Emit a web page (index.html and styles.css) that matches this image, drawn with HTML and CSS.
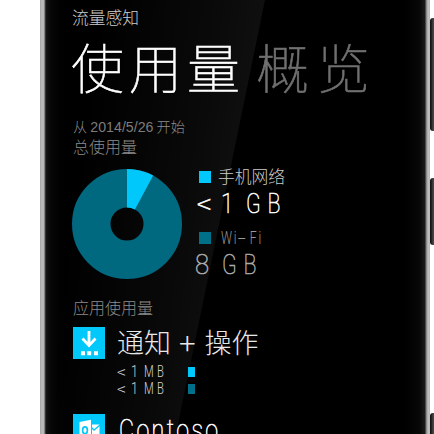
FILE: index.html
```html
<!DOCTYPE html>
<html lang="zh-CN">
<head>
<meta charset="utf-8">
<title>流量感知</title>
<link rel="stylesheet" href="styles.css">
</head>
<body>
<div class="stage">
  <main class="phone">
    <div class="gloss"></div>
    <div class="content">
      <div class="app-name">流量感知</div>
      <h1 class="pivot"><span class="active">使用量</span><span class="next">概览</span></h1>
      <div class="since">从 <span class="date">2014/5/26</span> 开始</div>
      <div class="total">总使用量</div>
      <section class="summary">
        <svg class="donut" viewBox="-55 -55 110 110">
          <circle r="35.75" fill="none" stroke="#00687f" stroke-width="38.5"/>
          <path d="M0-55A55 55 0 0 1 26.2-48.4L7.9-14.5A16.5 16.5 0 0 0 0-16.5Z" fill="#00c8fa"/>
        </svg>
        <div class="legend">
          <div class="key"><i class="swatch cell"></i><span class="key-name">手机网络</span></div>
          <div class="amount"><span class="less">&lt;</span><span class="latin one">1</span><span class="latin unit">GB</span></div>
          <div class="key wifi-key"><i class="swatch wifi"></i><span class="latin wifi-name">Wi<b class="dash">-</b>Fi</span></div>
          <div class="amount dim"><span class="latin eight">8</span><span class="latin unit">GB</span></div>
        </div>
      </section>
      <div class="apps-title">应用使用量</div>
      <section class="app">
        <svg class="tile" viewBox="0 0 32 32">
          <path fill="#00c8fa" d="M0 0h32v32H0z"/>
          <path d="M16 4v14M9.500 11.500l6.500 7 6.500-7" fill="none" stroke="#fff" stroke-width="2.800"/>
          <path d="M8 24.200h4v4H8zM14.200 24.200h4v4h-4zM21 24.200h4v4h-4z" fill="#fff"/>
        </svg>
        <div class="app-info">
          <div class="app-title">通知 <span class="plus">+</span> 操作</div>
          <div class="usage"><span class="less">&lt;</span><span class="latin one">1</span><span class="latin unit">MB</span><i class="bar cell"></i></div>
          <div class="usage"><span class="less">&lt;</span><span class="latin one">1</span><span class="latin unit">MB</span><i class="bar wifi"></i></div>
        </div>
      </section>
      <section class="app second">
        <svg class="tile" viewBox="0 0 32 32">
          <path fill="#00c8fa" d="M0 0h32v32H0z"/>
          <path d="M6.500 8L18 5.800v22L6.500 26zM19 10.500h7.500v11H19z" fill="#fff"/>
          <ellipse cx="12" cy="16.300" rx="2.400" ry="3.400" fill="none" stroke="#00c8fa" stroke-width="1.700"/>
          <path d="M18.500 13.500l2.500 2.500 6-5" fill="none" stroke="#00c8fa" stroke-width="1.300"/>
        </svg>
        <div class="app-info"><span class="latin contoso">Contoso</span></div>
      </section>
    </div>
  </main>
  <i class="button volume"></i>
  <i class="button power"></i>
  <i class="button camera"></i>
</div>
</body>
</html>
```

FILE: styles.css
```css
* { box-sizing: border-box; }
body { margin: 0; background: #fff; overflow: hidden; }
.stage {
  position: relative;
  width: 434px;
  height: 434px;
  padding-left: 40px;
  overflow: hidden;
  font-family: "Noto Sans CJK SC", sans-serif;
  font-weight: 300;
  color: #fff;
}
.phone {
  position: relative;
  width: 390px;
  height: 434px;
  padding-left: 32px;
  background: linear-gradient(90deg, #a5a5a5 0, #bcbcbc 2px, #b4b4b4 4px, #555 5px, #141414 6px, #080808 10px, #020202 18px, #000 26px, #000 365px, #080808 380px, #1a1a1a 385px, #777 386px, #999 387px, #c2c2c2 388px, #b4b4b4 390px);
}
.gloss {
  position: absolute;
  left: 20px;
  top: 0;
  width: 206px;
  height: 434px;
  background: linear-gradient(98deg, rgba(255,255,255,0) 15%, rgba(255,255,255,.04) 60%, rgba(255,255,255,.09) 100%);
  clip-path: polygon(0 0, 205px 0, 116px 434px, 0 434px);
}
.content { position: relative; display: flex; flex-direction: column; white-space: nowrap; }
.latin { display: inline-block; font-family: Roboto, sans-serif; transform-origin: 0 50%; }
.app-name { height: 34px; line-height: 35px; font-size: 16.8px; color: #ccc; }
.pivot {
  display: flex;
  gap: 11px;
  margin: 0 0 0 -1px;
  height: 66px;
  line-height: 64px;
  font-size: 53px;
  letter-spacing: 5px;
  font-weight: 100;
  -webkit-text-stroke: .6px;
}
.next { color: #707070; letter-spacing: 8px; }
.since { margin: 16px 0 0 1px; height: 20px; line-height: 20px; font-size: 14.2px; color: #8c8c8c; }
.date { font-family: "Liberation Sans", sans-serif; color: #7c7c7c; }
.total { margin-left: 1px; height: 20px; line-height: 21px; font-size: 16px; color: #8c8c8c; }
.summary { display: flex; gap: 17px; margin-top: 13px; height: 110px; }
.donut { width: 110px; height: 110px; }
.key { display: flex; align-items: center; gap: 7px; height: 16px; }
.swatch { width: 12px; height: 12px; }
.cell { background: #00c8fa; }
.wifi { background: #007089; }
.key-name { font-size: 16.8px; line-height: 14px; margin-top: -2px; color: #ccc; }
.amount {
  display: flex;
  height: 38px;
  line-height: 42px;
  margin-top: -2px;
  font-size: 28.5px;
  font-weight: 100;
  -webkit-text-stroke: .6px;
}
.amount .less { width: 24px; margin-left: -2px; font-size: 27px; line-height: 40px; }
.amount .one { width: 25px; transform: scaleX(.8); }
.amount .eight { width: 27px; margin-left: -4px; transform: scaleX(.9); }
.amount .unit { letter-spacing: 9px; transform: scaleX(.75); }
.wifi-key { margin-top: 9px; gap: 10px; }
.wifi-name { font-size: 17.5px; letter-spacing: 2.5px; transform: scaleX(.7); color: #999; line-height: 16px; }
.dash { display: inline-block; font-weight: 300; transform: scaleX(2.400); margin: 0 5px 0 4px; }
.dim { color: #aaa; }
.apps-title { margin: 17px 0 0 1px; height: 22px; line-height: 22px; font-size: 16px; color: #8c8c8c; }
.app { display: flex; gap: 12px; margin: 9px 0 0 1px; height: 87px; }
.tile { width: 32px; height: 32px; }
.app-title { height: 36px; line-height: 30px; font-size: 27px; color: #e8e8e8; }
.plus { display: inline-block; margin: 0 3.500px; transform: scale(1.150); }
.usage { display: flex; align-items: center; height: 17px; font-size: 16.5px; line-height: 17px; color: #d4d4d4; }
.usage .less { width: 14px; font-size: 16px; line-height: 15px; }
.usage .one { width: 13px; transform: scaleX(.75); }
.usage .unit { width: 44px; letter-spacing: 5px; transform: scaleX(.68); }
.bar { width: 7px; height: 10px; }
.second { margin-top: 0; }
.contoso { margin-left: 2px; font-size: 29px; line-height: 33px; letter-spacing: 3px; font-weight: 100; -webkit-text-stroke: .6px; transform: scaleX(.8); }
.button { position: absolute; left: 430px; width: 8px; border-radius: 3px; background: linear-gradient(90deg, #161616 1px, #444 3px); }
.volume { top: 18px; height: 113px; }
.power { top: 178px; height: 67px; }
.camera { top: 413px; height: 67px; }
```
